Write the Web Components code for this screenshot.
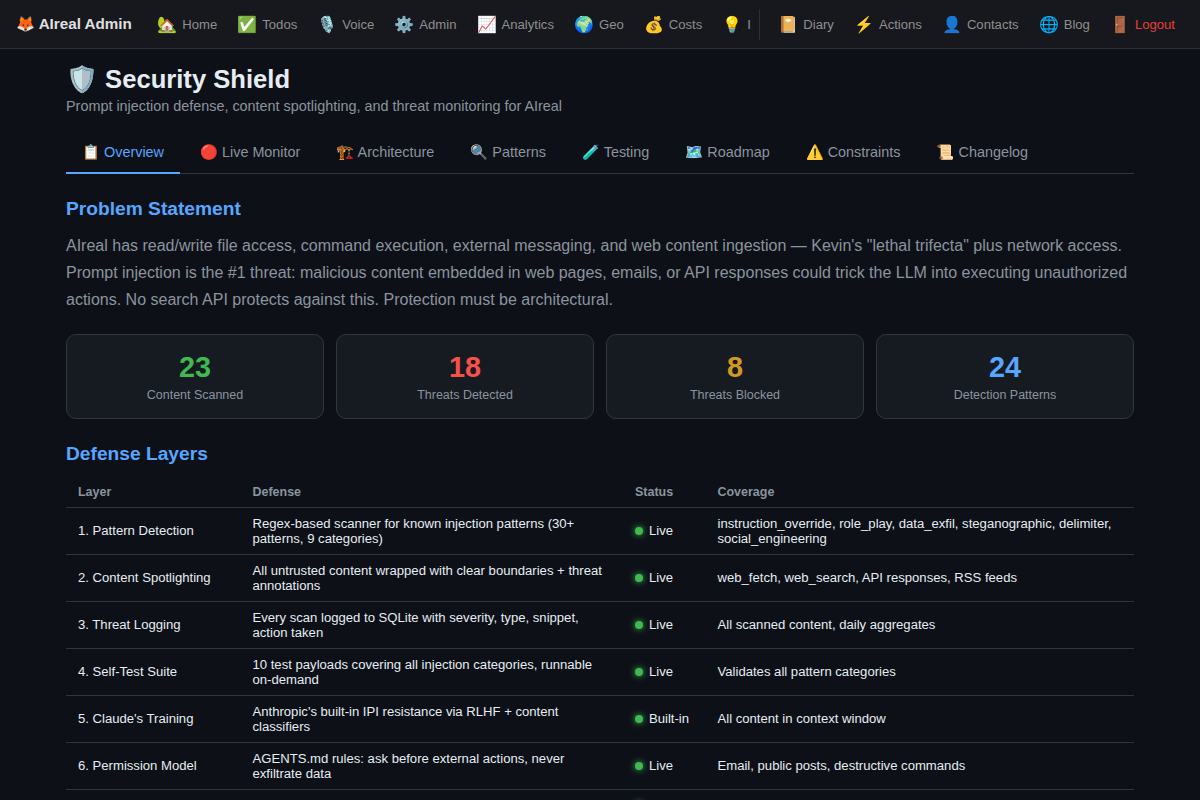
<!DOCTYPE html>
<html>
<head>
<meta charset="utf-8">
<title>Security Shield</title>
<style>
  html, body { margin: 0; height: 100%; overflow: hidden; }
  body {
    background: #0d1117;
    color: #e6edf3;
    font-family: "Liberation Sans", Arial, sans-serif;
  }
</style>
</head>
<body>
<admin-nav>
  <nav-link icon="🏡">Home</nav-link>
  <nav-link icon="✅">Todos</nav-link>
  <nav-link icon="🎙️">Voice</nav-link>
  <nav-link icon="⚙️">Admin</nav-link>
  <nav-link icon="📈">Analytics</nav-link>
  <nav-link icon="🌍">Geo</nav-link>
  <nav-link icon="💰">Costs</nav-link>
  <nav-link icon="💡">Ideas</nav-link>
  <nav-link slot="right" icon="📔">Diary</nav-link>
  <nav-link slot="right" icon="⚡">Actions</nav-link>
  <nav-link slot="right" icon="👤">Contacts</nav-link>
  <nav-link slot="right" icon="🌐">Blog</nav-link>
  <nav-link slot="right" icon="🚪" danger>Logout</nav-link>
</admin-nav>

<page-main>
  <page-header icon="🛡️" heading="Security Shield">Prompt injection defense, content spotlighting, and threat monitoring for AIreal</page-header>

  <tab-bar>
    <tab-item active>📋 Overview</tab-item>
    <tab-item>🔴 Live Monitor</tab-item>
    <tab-item>🏗️ Architecture</tab-item>
    <tab-item>🔍 Patterns</tab-item>
    <tab-item>🧪 Testing</tab-item>
    <tab-item>🗺️ Roadmap</tab-item>
    <tab-item>⚠️ Constraints</tab-item>
    <tab-item>📜 Changelog</tab-item>
  </tab-bar>

  <section-title>Problem Statement</section-title>
  <lead-text>AIreal has read/write file access, command execution, external messaging, and web content ingestion — Kevin's "lethal trifecta" plus network access. Prompt injection is the #1 threat: malicious content embedded in web pages, emails, or API responses could trick the LLM into executing unauthorized actions. No search API protects against this. Protection must be architectural.</lead-text>

  <stat-grid>
    <stat-card value="23" color="#3fb950">Content Scanned</stat-card>
    <stat-card value="18" color="#f85149">Threats Detected</stat-card>
    <stat-card value="8" color="#d29922">Threats Blocked</stat-card>
    <stat-card value="24" color="#58a6ff">Detection Patterns</stat-card>
  </stat-grid>

  <section-title>Defense Layers</section-title>
  <defense-table></defense-table>
</page-main>

<script>
  class AdminNav extends HTMLElement {
    constructor() {
      super();
      this.attachShadow({ mode: "open" });
      this.shadowRoot.innerHTML = `
        <style>
          :host {
            display: flex;
            align-items: center;
            height: 48px;
            padding: 0 15px 0 16px;
            background: #16181d;
            border-bottom: 1px solid #2c2e33;
          }
          .brand {
            flex: none;
            font-size: 15.2px;
            font-weight: 700;
            color: #e0e0e0;
            margin-right: 15.5px;
            white-space: nowrap;
          }
          .links {
            flex: 1;
            min-width: 0;
            display: flex;
            align-items: center;
            overflow: hidden;
          }
          .right {
            flex: none;
            display: flex;
            align-items: center;
            margin-left: 8px;
            padding-left: 8.5px;
            border-left: 1px solid #2c2e33;
          }
        </style>
        <div class="brand">🦊 AIreal Admin</div>
        <div class="links"><slot></slot></div>
        <div class="right"><slot name="right"></slot></div>
      `;
    }
  }

  class NavLink extends HTMLElement {
    constructor() {
      super();
      this.attachShadow({ mode: "open" });
    }

    connectedCallback() {
      const color = this.hasAttribute("danger") ? "#e5403a" : "#8f8f8f";
      this.shadowRoot.innerHTML = `
        <style>
          :host {
            flex: none;
            display: flex;
            align-items: center;
            gap: 5px;
            padding: 6px 10px;
            font-size: 13.12px;
            color: ${color};
            white-space: nowrap;
          }
          .icon { font-size: 16px; }
        </style>
        <span class="icon">${this.getAttribute("icon")}</span><slot></slot>
      `;
    }
  }

  class PageMain extends HTMLElement {
    constructor() {
      super();
      this.attachShadow({ mode: "open" });
      this.shadowRoot.innerHTML = `
        <style>
          :host {
            display: block;
            max-width: 1068px;
            margin: 0 auto;
            padding: 15px 0 0;
          }
        </style>
        <slot></slot>
      `;
    }
  }

  class PageHeader extends HTMLElement {
    constructor() {
      super();
      this.attachShadow({ mode: "open" });
    }

    connectedCallback() {
      this.shadowRoot.innerHTML = `
        <style>
          :host { display: block; margin-bottom: 16px; }
          h1 {
            margin: 0 0 4px;
            font-size: 25.6px;
            line-height: 30px;
            font-weight: 700;
            color: #e6edf3;
          }
          p {
            margin: 0;
            font-size: 14.4px;
            line-height: 16px;
            color: #8b949e;
          }
        </style>
        <h1>${this.getAttribute("icon")} ${this.getAttribute("heading")}</h1>
        <p><slot></slot></p>
      `;
    }
  }

  class TabBar extends HTMLElement {
    constructor() {
      super();
      this.attachShadow({ mode: "open" });
      this.shadowRoot.innerHTML = `
        <style>
          :host {
            display: flex;
            gap: 4px;
            border-bottom: 1px solid #30363d;
            margin-bottom: 24px;
          }
        </style>
        <slot></slot>
      `;
    }
  }

  class TabItem extends HTMLElement {
    constructor() {
      super();
      this.attachShadow({ mode: "open" });
    }

    connectedCallback() {
      const active = this.hasAttribute("active");
      this.shadowRoot.innerHTML = `
        <style>
          :host {
            display: block;
            padding: 11px 16px 9px;
            font-size: 14.4px;
            line-height: 22px;
            color: ${active ? "#58a6ff" : "#8b949e"};
            border-bottom: 2px solid ${active ? "#58a6ff" : "transparent"};
            margin-bottom: -1px;
            white-space: nowrap;
          }
        </style>
        <slot></slot>
      `;
    }
  }

  class SectionTitle extends HTMLElement {
    constructor() {
      super();
      this.attachShadow({ mode: "open" });
      this.shadowRoot.innerHTML = `
        <style>
          :host {
            display: block;
            margin-bottom: 12px;
            font-size: 19.2px;
            line-height: 22px;
            font-weight: 700;
            color: #58a6ff;
          }
        </style>
        <slot></slot>
      `;
    }
  }

  class LeadText extends HTMLElement {
    constructor() {
      super();
      this.attachShadow({ mode: "open" });
      this.shadowRoot.innerHTML = `
        <style>
          :host {
            display: block;
            margin-bottom: 21px;
            font-size: 16px;
            line-height: 27px;
            color: #8b949e;
          }
        </style>
        <slot></slot>
      `;
    }
  }

  class StatGrid extends HTMLElement {
    constructor() {
      super();
      this.attachShadow({ mode: "open" });
      this.shadowRoot.innerHTML = `
        <style>
          :host {
            display: grid;
            grid-template-columns: repeat(4, 1fr);
            gap: 12px;
            margin-bottom: 24px;
          }
        </style>
        <slot></slot>
      `;
    }
  }

  class StatCard extends HTMLElement {
    constructor() {
      super();
      this.attachShadow({ mode: "open" });
    }

    connectedCallback() {
      this.shadowRoot.innerHTML = `
        <style>
          :host {
            display: block;
            box-sizing: border-box;
            height: 85px;
            padding: 15px 16px;
            text-align: center;
            background: #161b22;
            border: 1px solid #30363d;
            border-radius: 10px;
          }
          .value {
            font-size: 28.8px;
            line-height: 34px;
            font-weight: 700;
            color: ${this.getAttribute("color")};
          }
          .label {
            margin-top: 4px;
            font-size: 12.48px;
            line-height: 14px;
            color: #8b949e;
          }
        </style>
        <div class="value">${this.getAttribute("value")}</div>
        <div class="label"><slot></slot></div>
      `;
    }
  }

  class StatusDot extends HTMLElement {
    constructor() {
      super();
      this.attachShadow({ mode: "open" });
      this.shadowRoot.innerHTML = `
        <style>
          :host { display: inline-flex; align-items: center; gap: 6px; }
          i {
            width: 8px;
            height: 8px;
            border-radius: 50%;
            background: #3fb950;
            box-shadow: 0 0 6px #3fb950;
          }
        </style>
        <i></i><slot></slot>
      `;
    }
  }

  // last row only shows the top of its status dot above the fold
  const LAYERS = [
    ["1. Pattern Detection", "Regex-based scanner for known injection patterns (30+ patterns, 9 categories)", "Live", "instruction_override, role_play, data_exfil, steganographic, delimiter, social_engineering"],
    ["2. Content Spotlighting", "All untrusted content wrapped with clear boundaries + threat annotations", "Live", "web_fetch, web_search, API responses, RSS feeds"],
    ["3. Threat Logging", "Every scan logged to SQLite with severity, type, snippet, action taken", "Live", "All scanned content, daily aggregates"],
    ["4. Self-Test Suite", "10 test payloads covering all injection categories, runnable on-demand", "Live", "Validates all pattern categories"],
    ["5. Claude's Training", "Anthropic's built-in IPI resistance via RLHF + content classifiers", "Built-in", "All content in context window"],
    ["6. Permission Model", "AGENTS.md rules: ask before external actions, never exfiltrate data", "Live", "Email, public posts, destructive commands"],
    ["", "", "", ""],
  ];

  class DefenseTable extends HTMLElement {
    constructor() {
      super();
      this.attachShadow({ mode: "open" });
    }

    connectedCallback() {
      const rows = LAYERS.map(([layer, defense, status, coverage]) => `
        <tr>
          <td>${layer}</td>
          <td>${defense}</td>
          <td><status-dot>${status}</status-dot></td>
          <td>${coverage}</td>
        </tr>`).join("");
      this.shadowRoot.innerHTML = `
        <style>
          :host { display: block; }
          table {
            width: 100%;
            table-layout: fixed;
            border-collapse: collapse;
            font-size: 13.12px;
            line-height: 15px;
          }
          th {
            padding: 8px 12px;
            text-align: left;
            font-size: 12.48px;
            line-height: 14px;
            font-weight: 700;
            color: #8b949e;
            border-bottom: 1px solid #30363d;
          }
          td {
            padding: 7.5px 12px 8.5px;
            height: 15px;
            color: #e6edf3;
            border-bottom: 1px solid #30363d;
          }
        </style>
        <table>
          <colgroup>
            <col style="width: 174.5px">
            <col style="width: 382.5px">
            <col style="width: 82.5px">
            <col>
          </colgroup>
          <thead>
            <tr><th>Layer</th><th>Defense</th><th>Status</th><th>Coverage</th></tr>
          </thead>
          <tbody>${rows}</tbody>
        </table>
      `;
    }
  }

  customElements.define("admin-nav", AdminNav);
  customElements.define("nav-link", NavLink);
  customElements.define("page-main", PageMain);
  customElements.define("page-header", PageHeader);
  customElements.define("tab-bar", TabBar);
  customElements.define("tab-item", TabItem);
  customElements.define("section-title", SectionTitle);
  customElements.define("lead-text", LeadText);
  customElements.define("stat-grid", StatGrid);
  customElements.define("stat-card", StatCard);
  customElements.define("status-dot", StatusDot);
  customElements.define("defense-table", DefenseTable);
</script>
</body>
</html>
